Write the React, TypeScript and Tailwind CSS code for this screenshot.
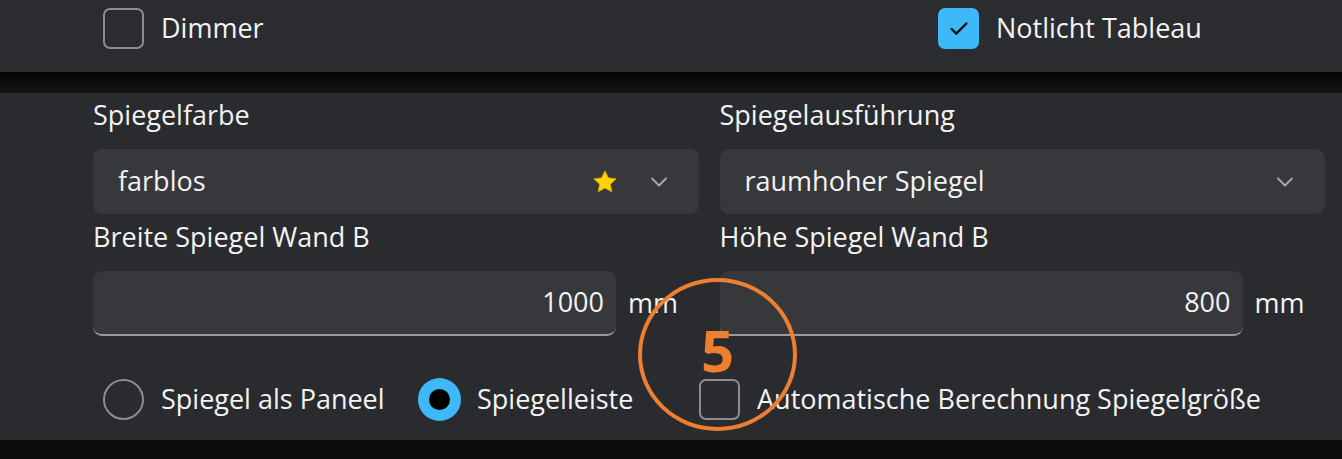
import { Check, ChevronDown } from "lucide-react";

function Box({ checked }: { checked?: boolean }) {
  if (checked) {
    return (
      <div className="w-[41px] h-[41px] rounded-[7px] bg-[#3cb9f6] flex items-center justify-center shrink-0">
        <Check className="w-[22px] h-[22px] text-[#111]" strokeWidth={2.6} />
      </div>
    );
  }
  return <div className="w-[41px] h-[41px] rounded-[7px] border-2 border-[#8d8d8f] shrink-0" />;
}

function Radio({ checked }: { checked?: boolean }) {
  if (checked) {
    return (
      <div className="w-[43px] h-[43px] rounded-full bg-[#3cb9f6] flex items-center justify-center shrink-0">
        <div className="w-[21px] h-[21px] rounded-full bg-black" />
      </div>
    );
  }
  return <div className="w-[41px] h-[41px] rounded-full border-2 border-[#8d8d8f] shrink-0" />;
}

function Star() {
  return (
    <svg width="26" height="25" viewBox="0 0 24 23">
      <path
        d="M12 1.5l3.1 6.6 7.2.9-5.3 5 1.4 7.1L12 17.6l-6.4 3.5L7 14l-5.3-5 7.2-.9z"
        fill="#ffd200"
        stroke="#c9a200"
        strokeWidth="0.8"
        strokeLinejoin="round"
      />
    </svg>
  );
}

function Select({ value, star }: { value: string; star?: boolean }) {
  return (
    <div className="h-[65px] rounded-[9px] bg-[#37383c] flex items-center pl-[25px] pr-[26px]">
      <span className="flex-1">{value}</span>
      {star && <span className="mr-[27px] flex items-center"><Star /></span>}
      <ChevronDown className="w-[28px] h-[28px] text-[#a9a9ab]" strokeWidth={1.6} />
    </div>
  );
}

function NumberField({ value }: { value: string }) {
  return (
    <div className="flex items-center">
      <div className="w-[523px] h-[65px] rounded-[9px] bg-[#37383c] border-b-2 border-[#9a9a9c] flex items-center justify-end pr-[12px]">
        {value}
      </div>
      <span className="ml-[12px]">mm</span>
    </div>
  );
}

export default function App() {
  return (
    <div
      className="relative w-[1342px] h-[459px] bg-[#0b0b0c] text-[#f3f3f3] text-[27px] overflow-hidden"
      style={{ fontFamily: '"Open Sans", "Noto Sans", sans-serif' }}
    >
      <div className="h-[72px] bg-[#2b2c30] flex items-start pt-[8px] pl-[103px]">
        <div className="w-[835px] flex items-center gap-[17px]">
          <Box />
          <span>Dimmer</span>
        </div>
        <div className="flex items-center gap-[17px]">
          <Box checked />
          <span>Notlicht Tableau</span>
        </div>
      </div>
      <div className="h-[21px] bg-gradient-to-b from-[#050505] to-[#151517]" />
      <div className="h-[347px] bg-[#2a2b2f] pt-[4px] pl-[93px] pr-[17px]">
        <div className="grid grid-cols-2 gap-x-[21px]">
          <div>
            <div className="h-[36px] leading-[36px] mb-[16px]">Spiegelfarbe</div>
            <Select value="farblos" star />
          </div>
          <div>
            <div className="h-[36px] leading-[36px] mb-[16px]">Spiegelausführung</div>
            <Select value="raumhoher Spiegel" />
          </div>
          <div className="mt-[5px]">
            <div className="h-[36px] leading-[36px] mb-[16px]">Breite Spiegel Wand B</div>
            <NumberField value="1000" />
          </div>
          <div className="mt-[5px]">
            <div className="h-[36px] leading-[36px] mb-[16px]">Höhe Spiegel Wand B</div>
            <NumberField value="800" />
          </div>
        </div>
        <div className="mt-[41px] h-[44px] flex items-center pl-[10px]">
          <div className="w-[315px] flex items-center gap-[17px]">
            <Radio />
            <span>Spiegel als Paneel</span>
          </div>
          <div className="w-[281px] flex items-center gap-[16px]">
            <Radio checked />
            <span>Spiegelleiste</span>
          </div>
          <div className="flex items-center gap-[17px]">
            <Box />
            <span>Automatische Berechnung Spiegelgröße</span>
          </div>
        </div>
      </div>
      <div className="absolute left-[638px] top-[278px] w-[159px] h-[153px] rounded-[50%] border-[4px] border-[#ee7e30] flex items-center justify-center">
        <span
          className="text-[58px] font-bold text-[#ee7e30] leading-none -mt-[10px]"
          style={{ fontFamily: '"Open Sans", sans-serif' }}
        >
          5
        </span>
      </div>
    </div>
  );
}
